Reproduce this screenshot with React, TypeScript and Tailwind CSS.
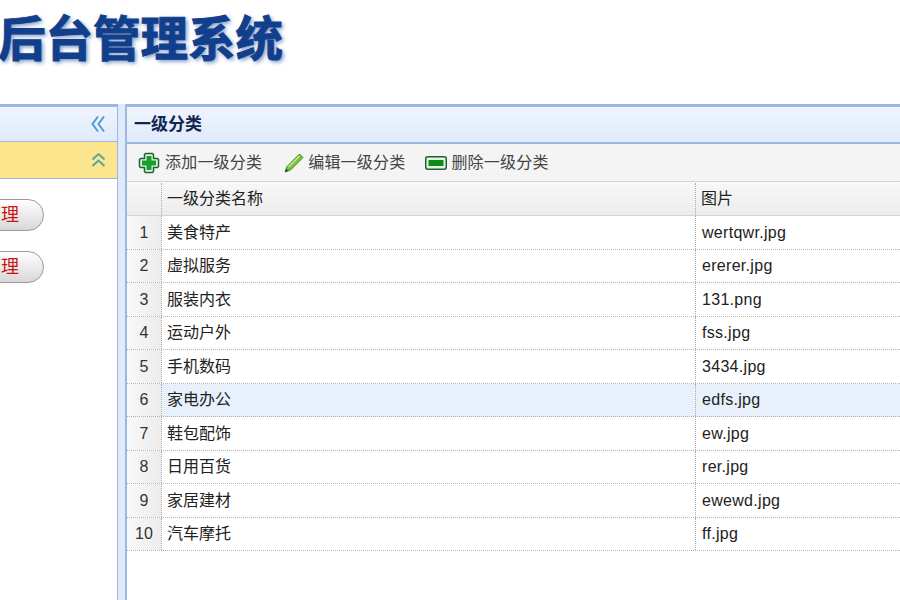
const rows = [
  ['美食特产', 'wertqwr.jpg'],
  ['虚拟服务', 'ererer.jpg'],
  ['服装内衣', '131.png'],
  ['运动户外', 'fss.jpg'],
  ['手机数码', '3434.jpg'],
  ['家电办公', 'edfs.jpg'],
  ['鞋包配饰', 'ew.jpg'],
  ['日用百货', 'rer.jpg'],
  ['家居建材', 'ewewd.jpg'],
  ['汽车摩托', 'ff.jpg'],
];

const font = 'font-["Liberation_Sans","Noto_Sans_CJK_SC",sans-serif]';

function Chevrons({ up }: { up?: boolean }) {
  return up ? (
    <svg width="15" height="16" viewBox="0 0 15 16" fill="none" stroke="#5aa5a0" strokeWidth="2">
      <path d="M1.500 7.500 7.500 2l6 5.500M1.500 14 7.500 8.500l6 5.500" />
    </svg>
  ) : (
    <svg width="14" height="18" viewBox="0 0 14 18" fill="none" stroke="#4f9bd0" strokeWidth="2">
      <path d="M7 1.500 1.500 9 7 16.500M13 1.500 7.500 9l5.500 7.500" />
    </svg>
  );
}

function AddIcon() {
  return (
    <svg width="22" height="22" viewBox="0 0 22 22">
      <path d="M7.500 1.500h7l1 1v4h4l1 1v7l-1 1h-4v4l-1 1h-7l-1-1v-4h-4l-1-1v-7l1-1h4v-4z" fill="#e4f3df" stroke="#1f5f33" strokeWidth="1.500" strokeLinejoin="round" />
      <path d="M8.500 4h5v4.500H18v5h-4.500V18h-5v-4.500H4v-5h4.500z" fill="#17a02e" />
    </svg>
  );
}

function EditIcon() {
  return (
    <svg width="20" height="20" viewBox="0 0 20 20">
      <path d="M15.500 1 19 4.500 6.500 17 1 19l2-5.500z" fill="#78c23c" stroke="#3f8a24" strokeWidth="1" strokeLinejoin="round" />
      <path d="M15.500 3 4.500 14" stroke="#c6ec8e" strokeWidth="1.500" />
      <path d="M1 19l1-3.500L4.500 18z" fill="#2c5a1c" />
    </svg>
  );
}

function RemoveIcon() {
  return (
    <svg width="22" height="14" viewBox="0 0 22 14">
      <rect x="0.750" y="0.750" width="20.500" height="12.500" rx="2" fill="#e4f3df" stroke="#1f5f33" strokeWidth="1.500" />
      <rect x="3.500" y="4" width="15" height="6" fill="#0c8a1a" />
    </svg>
  );
}

export default function App() {
  return (
    <div className={`h-[600px] w-[900px] overflow-hidden bg-white ${font}`}>
      <div className="h-[104px] pt-[10px]">
        <div className="ml-[-2px] whitespace-nowrap text-[47.500px] font-bold leading-[60px] text-[#123f8c] [-webkit-text-stroke:1px_#123f8c] [text-shadow:2px_2px_4px_#6f8fc0]">
          后台管理系统
        </div>
      </div>

      <div className="flex h-[496px]">
        <div className="w-[118px] shrink-0 border-t-[3px] border-r border-[#9ab8e2]">
          <div className="flex h-[35px] items-center justify-end border-b border-[#9ab8e2] bg-gradient-to-b from-[#eff5fe] to-[#dfeafb] pr-[12px]">
            <Chevrons />
          </div>
          <div className="flex h-[37px] items-center justify-end border-b border-[#9ab8e2] bg-[#fbe68e] pr-[11px]">
            <Chevrons up />
          </div>
          <div className="flex flex-col gap-[20px] pt-[20px]">
            <div className="ml-[-40px] flex h-[32px] w-[84px] items-center justify-end rounded-full border border-[#999999] bg-gradient-to-b from-white to-[#d8d8d8] pr-[24px] text-[18px] text-[#c81414]">
              管理
            </div>
            <div className="ml-[-40px] flex h-[32px] w-[84px] items-center justify-end rounded-full border border-[#999999] bg-gradient-to-b from-white to-[#d8d8d8] pr-[24px] text-[18px] text-[#c81414]">
              管理
            </div>
          </div>
        </div>

        <div className="w-[7px] shrink-0 bg-[#e0eaf8]" />

        <div className="min-w-0 flex-1 border-t-[3px] border-l-2 border-[#9ab8e2]">
          <div className="flex h-[37px] items-center border-b-2 border-[#9ab8e2] bg-gradient-to-b from-[#eff5fe] to-[#dfeafb] pl-[7px] text-[17px] font-bold text-[#12264f]">
            一级分类
          </div>
          <div className="flex h-[37px] items-center bg-[#f4f4f4] pl-[11px] text-[16px] tracking-[0.2px] text-[#444444]">
            <span className="flex items-center gap-[5px]"><AddIcon />添加一级分类</span>
            <span className="ml-[22px] flex items-center gap-[4px]"><EditIcon />编辑一级分类</span>
            <span className="ml-[20px] flex items-center gap-[4px]"><RemoveIcon />删除一级分类</span>
          </div>
          <div className="flex h-[35px] border-t border-b border-[#d4d4d4] bg-gradient-to-b from-[#f8f8f8] to-[#ececec] pt-px text-[16px] text-[#222222]">
            <div className="w-[35px] shrink-0 border-r border-dotted border-[#aaaaaa]" />
            <div className="flex w-[534px] shrink-0 items-center border-r border-dotted border-[#aaaaaa] pl-[5px]">一级分类名称</div>
            <div className="flex items-center pl-[5px]">图片</div>
          </div>
          {rows.map(([name, image], i) => (
            <div key={i} className={`flex h-[33.5px] border-b border-dotted border-[#b4b4b4] text-[16px] text-[#222222] ${i === 5 ? 'bg-[#e8f1fb]' : ''}`}>
              <div className="flex w-[35px] shrink-0 items-center justify-center border-r border-dotted border-[#aaaaaa] bg-gradient-to-r from-[#f8f8f8] to-[#ececec] pt-px text-[#333333]">
                {i + 1}
              </div>
              <div className="flex w-[534px] shrink-0 items-center border-r border-dotted border-[#aaaaaa] pl-[5px] pt-px">{name}</div>
              <div className="flex items-center pl-[6px] pt-px tracking-[0.3px]">{image}</div>
            </div>
          ))}
        </div>
      </div>
    </div>
  );
}
